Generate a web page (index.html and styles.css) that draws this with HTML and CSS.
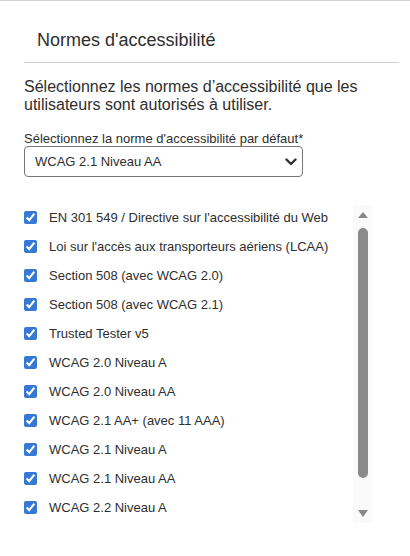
FILE: index.html
```html
<!DOCTYPE html>
<html lang="fr">
    <head>
        <meta charset="utf-8">
        <meta name="viewport" content="width=device-width, initial-scale=1.0">
        <title>Normes d'accessibilité</title>

        <link rel="stylesheet" href="styles.css">
    </head>
    <body>
        <main class="panel">
            <h2 class="title">Normes d'accessibilité</h2>
            <p class="intro">Sélectionnez les normes d’accessibilité que les utilisateurs sont autorisés à utiliser.</p>

            <label class="label" for="defaut">Sélectionnez la norme d'accessibilité par défaut*</label>
            <div class="select-wrap">
                <select id="defaut" class="select">
                    <option>WCAG 2.0 Niveau A</option>
                    <option>WCAG 2.0 Niveau AA</option>
                    <option>WCAG 2.1 Niveau A</option>
                    <option selected>WCAG 2.1 Niveau AA</option>
                    <option>WCAG 2.2 Niveau A</option>
                </select>
                <svg class="chevron" width="12" height="8" viewBox="0 0 12 8">
                    <path d="M1.5 1.5 L6 6 L10.5 1.5" fill="none" stroke="#333" stroke-width="2.4" stroke-linecap="round" stroke-linejoin="round"/>
                </svg>
            </div>

            <div class="norms">
                <ul class="list">
                    <li class="item"><input type="checkbox" checked> <span>EN 301 549 / Directive sur l'accessibilité du Web</span></li>
                    <li class="item"><input type="checkbox" checked> <span>Loi sur l'accès aux transporteurs aériens (LCAA)</span></li>
                    <li class="item"><input type="checkbox" checked> <span>Section 508 (avec WCAG 2.0)</span></li>
                    <li class="item"><input type="checkbox" checked> <span>Section 508 (avec WCAG 2.1)</span></li>
                    <li class="item"><input type="checkbox" checked> <span>Trusted Tester v5</span></li>
                    <li class="item"><input type="checkbox" checked> <span>WCAG 2.0 Niveau A</span></li>
                    <li class="item"><input type="checkbox" checked> <span>WCAG 2.0 Niveau AA</span></li>
                    <li class="item"><input type="checkbox" checked> <span>WCAG 2.1 AA+ (avec 11 AAA)</span></li>
                    <li class="item"><input type="checkbox" checked> <span>WCAG 2.1 Niveau A</span></li>
                    <li class="item"><input type="checkbox" checked> <span>WCAG 2.1 Niveau AA</span></li>
                    <li class="item"><input type="checkbox" checked> <span>WCAG 2.2 Niveau A</span></li>
                </ul>
                <div class="scrollbar">
                    <div class="arrow-up"></div>
                    <div class="thumb"></div>
                    <div class="arrow-down"></div>
                </div>
            </div>
        </main>
    </body>
</html>
```

FILE: styles.css
```css
body {
    margin: 0;
    font-family: "Liberation Sans", Arial, sans-serif;
    color: #2e2e2e;
    background: #fff;
}
.panel {
    border-top: 1px solid #d4d4d4;
    padding: 0 11px 0 24px;
}
.title {
    margin: 29px 0 0 0;
    padding: 0 0 11px 13px;
    font-size: 18px;
    font-weight: normal;
    line-height: 21px;
    border-bottom: 1px solid #cfcfcf;
}
.intro {
    margin: 14.5px 0 0 0;
    font-size: 16px;
    line-height: 18px;
}
.label {
    display: block;
    margin-top: 17.5px;
    font-size: 13px;
    line-height: 15px;
}
.select-wrap {
    position: relative;
    width: 279px;
}
.select {
    appearance: none;
    display: block;
    width: 279px;
    height: 31px;
    padding: 0 24px 0 10px;
    border: 1px solid #777;
    border-radius: 4px;
    background: #fff;
    color: #2e2e2e;
    font-family: inherit;
    font-size: 13px;
}
.chevron {
    position: absolute;
    right: 6px;
    top: 12px;
    pointer-events: none;
}
.norms {
    display: flex;
    margin-top: 25.5px;
    margin-right: 26px;
    height: 320px;
}
.list {
    flex: 1;
    list-style: none;
    margin: 0;
    padding: 0;
    overflow: hidden;
}
.item {
    display: flex;
    align-items: center;
    gap: 12px;
    height: 29.1px;
    font-size: 13px;
}
.item input {
    width: 13px;
    height: 13px;
    margin: 0;
    accent-color: #3778d4;
}
.scrollbar {
    display: flex;
    flex-direction: column;
    align-items: center;
    box-sizing: border-box;
    width: 20px;
    height: 318px;
    margin-top: 2px;
    padding-top: 7px;
    background: #fafafa;
}
.arrow-up {
    width: 0;
    height: 0;
    border-left: 5.5px solid transparent;
    border-right: 5.5px solid transparent;
    border-bottom: 6px solid #888;
}
.thumb {
    width: 10px;
    height: 250px;
    margin-top: 10px;
    border-radius: 5px;
    background: #8a8a8a;
}
.arrow-down {
    width: 0;
    height: 0;
    margin-top: 32px;
    border-left: 5.5px solid transparent;
    border-right: 5.5px solid transparent;
    border-top: 7px solid #888;
}
```
